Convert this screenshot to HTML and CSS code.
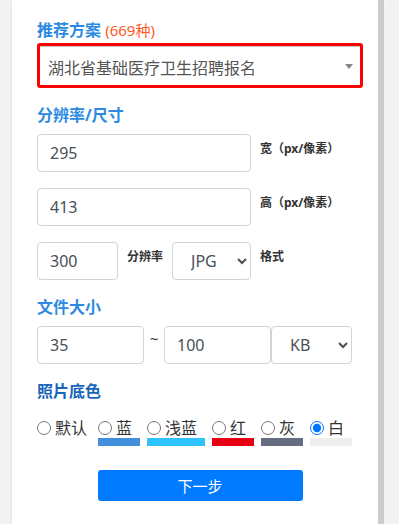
FILE: index.html
```html
<!DOCTYPE html>
<html lang="zh-CN">
<head>
  <meta charset="UTF-8" />
  <meta name="viewport" content="width=device-width, initial-scale=1.0"/>
  <title>证件照制作</title>
  <link rel="stylesheet" href="styles.css">
</head>
<body>
  <div class="card">
    <div class="group">
      <div class="group-title">推荐方案 <span class="count">(669种)</span></div>
      <div class="highlight">
        <div class="plan-select">
          <select class="plan">
            <option>湖北省基础医疗卫生招聘报名</option>
          </select>
          <span class="plan-arrow"></span>
        </div>
      </div>
    </div>

    <div class="group">
      <div class="group-title">分辨率/尺寸</div>
      <div class="row">
        <input class="field w-size" type="text" value="295" />
        <span class="hint">宽（px/像素）</span>
      </div>
      <div class="row">
        <input class="field w-size" type="text" value="413" />
        <span class="hint">高（px/像素）</span>
      </div>
      <div class="row">
        <input class="field w-dpi" type="text" value="300" />
        <span class="hint">分辨率</span>
        <select class="field pick w-fmt">
          <option>JPG</option>
          <option>PNG</option>
        </select>
        <span class="hint">格式</span>
      </div>
    </div>

    <div class="group">
      <div class="group-title">文件大小</div>
      <div class="row tight">
        <input class="field w-kb" type="text" value="35" />
        <span class="tilde">~</span>
        <input class="field w-kb" type="text" value="100" />
        <select class="field pick w-unit">
          <option>KB</option>
          <option>MB</option>
        </select>
      </div>
    </div>

    <div class="group">
      <div class="group-title dark">照片底色</div>
      <div class="colors">
        <label class="color first">
          <span class="color-top"><input type="radio" name="bg" /> 默认</span>
        </label>
        <label class="color">
          <span class="color-top"><input type="radio" name="bg" /> 蓝</span>
          <span class="bar" style="background:#438fdc"></span>
        </label>
        <label class="color">
          <span class="color-top"><input type="radio" name="bg" /> 浅蓝</span>
          <span class="bar" style="background:#2fc3fd"></span>
        </label>
        <label class="color">
          <span class="color-top"><input type="radio" name="bg" /> 红</span>
          <span class="bar" style="background:#e60012"></span>
        </label>
        <label class="color">
          <span class="color-top"><input type="radio" name="bg" /> 灰</span>
          <span class="bar" style="background:#666d80"></span>
        </label>
        <label class="color">
          <span class="color-top"><input type="radio" name="bg" checked /> 白</span>
          <span class="bar" style="background:#eeeeee"></span>
        </label>
      </div>
    </div>

    <button class="next" type="button">下一步</button>
  </div>
</body>
</html>
```

FILE: styles.css
```css
html, body {
  margin: 0;
  height: 524px;
  overflow: hidden;
}
body {
  font-family: "Noto Sans", "Noto Sans CJK SC", sans-serif;
  background-color: #f2f2f2;
  color: #333;
}
.card {
  margin-left: 12px;
  width: 372px;
  height: 524px;
  box-sizing: border-box;
  padding: 18px 15px 0 25px;
  background: white;
  border-right: 6px solid #cccccc;
  box-shadow: 0 0 2px rgba(0,0,0,0.12), 2px 0 0 #fafafa;
}
.group {
  margin-bottom: 15px;
}
.group-title {
  font-size: 16px;
  line-height: 24px;
  font-weight: bold;
  color: #2d8ae2;
  margin-bottom: 7px;
}
.group-title.dark { color: #1766bc; }
.count {
  font-weight: normal;
  font-size: 15px;
  color: #ff5a1f;
}
.highlight {
  border: 3px solid #ff0000;
  border-radius: 3px;
  margin-top: -6px;
}
.plan-select {
  position: relative;
}
.plan {
  display: block;
  width: 100%;
  height: 39px;
  padding: 4px 8px 0;
  border: none;
  border-top: 1px solid #c8c8c8;
  background: white;
  font-family: inherit;
  font-size: 16px;
  color: #555;
  appearance: none;
  -webkit-appearance: none;
  outline: none;
}
.plan-arrow {
  position: absolute;
  right: 7px;
  top: 18px;
  border-left: 4px solid transparent;
  border-right: 4px solid transparent;
  border-top: 5px solid #888;
}
.row {
  display: flex;
  align-items: flex-start;
  margin-bottom: 16px;
}
.row:last-child { margin-bottom: 0; }
.field {
  height: 38px;
  box-sizing: border-box;
  padding: 6px 12px;
  border: 1px solid #ced4da;
  border-radius: 4px;
  background: white;
  font-family: inherit;
  font-size: 16px;
  color: #495057;
  outline: none;
}
.w-size { width: 214px; }
.w-dpi { width: 81px; }
.w-fmt { width: 79px; }
.w-kb { width: 107px; }
.w-unit { width: 81px; }
.pick {
  padding-left: 14px;
}
.hint {
  font-size: 12px;
  font-weight: bold;
  line-height: 16px;
  padding: 7px 9px 0;
  color: #333;
}
.tilde {
  width: 20px;
  text-align: center;
  font-size: 15px;
  line-height: 16px;
  padding-top: 4px;
  color: #333;
}
.colors {
  display: flex;
  gap: 7px;
  margin-top: 17px;
}
.color {
  display: flex;
  flex-direction: column;
  padding-right: 8px;
  position: relative;
}
.color.first { padding-right: 4px; }
.color-top {
  display: flex;
  align-items: center;
  font-size: 16px;
  line-height: 16px;
  color: #333;
}
.color-top input {
  margin: 0 4px 0 0;
  width: 14px;
  height: 14px;
}
.bar {
  position: absolute;
  left: 0;
  right: 0;
  top: 18px;
  height: 8px;
}
.next {
  display: block;
  width: 205px;
  height: 31px;
  margin: 34px auto 0;
  border: none;
  border-radius: 3px;
  background-color: #007bff;
  color: white;
  font-family: inherit;
  font-size: 15px;
  cursor: pointer;
}
```
